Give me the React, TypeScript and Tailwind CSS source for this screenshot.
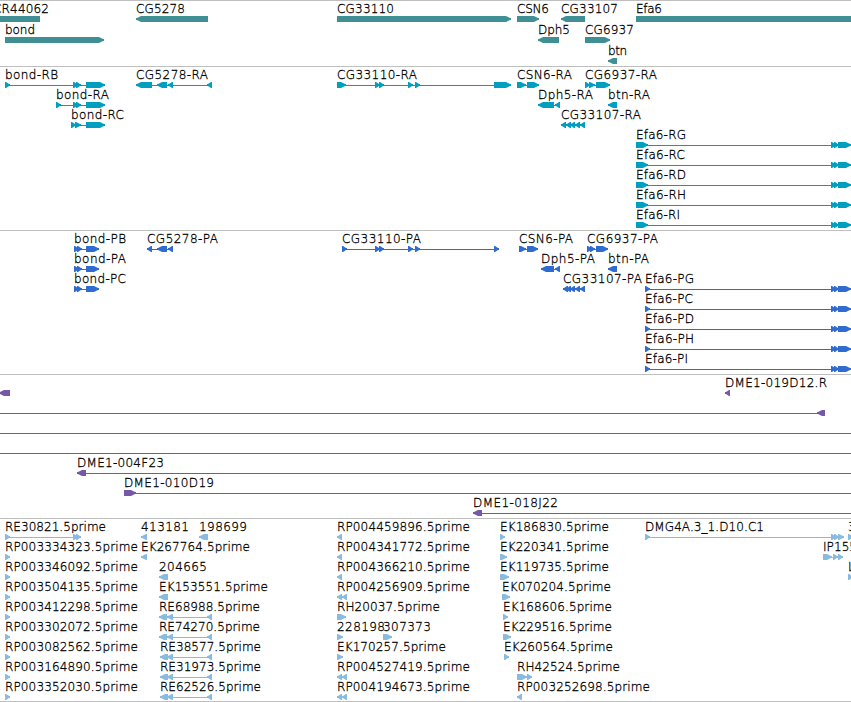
type Span = [number, number];

interface Feature {
  name?: string;
  x: number;
  row: number;
  strand: 1 | -1;
  blocks: Span[];
  // intron line, defaults to first block start .. last block end
  line?: Span;
}

interface Track {
  id: string;
  color: string;
  pitch: number;
  height: string;
  px: number;
  features: Feature[];
}

const WIDTH = 851;

// label advances in px, anything missing is 8
const ADVANCE: Record<string, number> = {
  P: 7, E: 7, F: 6, G: 9, S: 7, N: 9, D: 9, M: 10, H: 9, I: 3, J: 4, L: 7,
  '-': 7, '.': 4, _: 6, o: 7, n: 7, r: 5, i: 3, m: 11, e: 7, f: 4, a: 7, h: 7, t: 4,
};

const labelWidth = (s: string) => [...s].reduce((sum, c) => sum + (ADVANCE[c] ?? 8), 0);

const f = (name: string, x: number, row: number, strand: 1 | -1, blocks: Span[], line?: Span): Feature => ({
  name, x, row, strand, blocks, line,
});

const bondTail: Span[] = [[73, 78], [76, 81], [86, 105]];
const bondCds: Span[] = [[74, 79], [77, 82], [86, 99]];
const efaTail: Span[] = [[831, 836], [834, 839], [838, 851]];
const cgMid: Span[] = [[375, 380], [379, 384], [408, 413], [415, 420]];
const cg33107Tail: Span[] = [[566, 571], [570, 575], [575, 580], [580, 585]];
const reTail: Span[] = [[167, 173], [207, 212]];

const genes: Feature[] = [
  f('CR44062', -7, 0, -1, [[-7, 40]]),
  f('bond', 5, 1, 1, [[5, 104]]),
  f('CG5278', 136, 0, -1, [[136, 208]]),
  f('CG33110', 337, 0, 1, [[337, 511]]),
  f('CSN6', 517, 0, 1, [[517, 539]]),
  f('Dph5', 538, 1, -1, [[538, 559]]),
  f('CG33107', 561, 0, -1, [[561, 585]]),
  f('CG6937', 585, 1, 1, [[585, 610]]),
  f('btn', 608, 2, -1, [[608, 617]]),
  f('Efa6', 636, 0, 1, [[636, 870]]),
];

const transcripts: Feature[] = [
  f('bond-RB', 5, 0, 1, [[5, 10], ...bondTail]),
  f('bond-RA', 56, 1, 1, [[56, 61], ...bondTail]),
  f('bond-RC', 71, 2, 1, [[71, 76], [75, 81], [86, 105]]),
  f('CG5278-RA', 136, 0, -1, [[136, 152], [157, 167], [168, 173], [207, 212]]),
  f('CG33110-RA', 337, 0, 1, [[337, 346], ...cgMid, [494, 511]]),
  f('CSN6-RA', 517, 0, 1, [[517, 526], [527, 539]]),
  f('Dph5-RA', 538, 1, -1, [[538, 554], [555, 560]]),
  f('CG33107-RA', 561, 2, -1, [[561, 566], ...cg33107Tail]),
  f('CG6937-RA', 585, 0, 1, [[585, 590], [589, 595], [596, 610]]),
  f('btn-RA', 608, 1, -1, [[608, 617]]),
  ...['RG', 'RC', 'RD', 'RH', 'RI'].map((s, i) => f(`Efa6-${s}`, 636, i + 3, 1, [[636, 648], ...efaTail])),
];

const proteins: Feature[] = [
  ...['PB', 'PA', 'PC'].map((s, i) => f(`bond-${s}`, 74, i, 1, bondCds)),
  f('CG5278-PA', 147, 0, -1, [[147, 152], [157, 167], [168, 173]]),
  f('CG33110-PA', 342, 0, 1, [[342, 347], ...cgMid, [494, 499]]),
  f('CSN6-PA', 519, 0, 1, [[519, 526], [527, 538]]),
  f('Dph5-PA', 541, 1, -1, [[541, 554], [555, 560]]),
  f('CG33107-PA', 563, 2, -1, [[563, 568], ...cg33107Tail]),
  f('CG6937-PA', 587, 0, 1, [[587, 592], [590, 595], [596, 608]]),
  f('btn-PA', 608, 1, -1, [[608, 617]]),
  ...['PG', 'PC', 'PD', 'PH', 'PI'].map((s, i) => f(`Efa6-${s}`, 645, i + 2, 1, [[645, 650], ...efaTail])),
];

const clones: Feature[] = [
  f('', 0, 0, -1, [[-1, 10]]),
  f('DME1-019D12.R', 725, 0, -1, [[725, 730]]),
  f('', 0, 1, -1, [[817, 825]], [0, 825]),
  f('', 0, 2, 1, [], [0, WIDTH]),
  f('', 0, 3, 1, [], [0, WIDTH]),
  f('DME1-004F23', 77, 4, -1, [[77, 86]], [77, WIDTH]),
  f('DME1-010D19', 124, 5, 1, [[124, 136]], [124, WIDTH]),
  f('DME1-018J22', 473, 6, -1, [[473, 482]], [473, WIDTH]),
];

const ests: Feature[] = [
  f('RE30821.5prime', 5, 0, 1, [[5, 10], [73, 78], [76, 81]]),
  ...[
    'RP003334323', 'RP003346092', 'RP003504135', 'RP003412298',
    'RP003302072', 'RP003082562', 'RP003164890', 'RP003352030',
  ].map((s, i) => f(`${s}.5prime`, 5, i + 1, 1, [[5, 10]])),
  f('413181', 141, 0, -1, [[141, 147]]),
  f('198699', 199, 0, -1, [[199, 208]]),
  f('EK267764.5prime', 141, 1, -1, [[141, 147]]),
  f('204665', 159, 2, -1, [[159, 168]]),
  f('EK153551.5prime', 159, 3, -1, [[159, 168]]),
  f('RE68988.5prime', 159, 4, -1, [[159, 167], ...reTail]),
  f('RE74270.5prime', 159, 5, -1, [[159, 167], ...reTail]),
  f('RE38577.5prime', 160, 6, -1, [[160, 168], ...reTail]),
  f('RE31973.5prime', 160, 7, -1, [[160, 168], ...reTail]),
  f('RE62526.5prime', 160, 8, -1, [[160, 168], ...reTail]),
  f('RP004459896.5prime', 337, 0, -1, [[337, 342]]),
  f('RP004341772.5prime', 337, 1, -1, [[337, 342]]),
  f('RP004366210.5prime', 337, 2, -1, [[337, 342]]),
  f('RP004256909.5prime', 337, 3, -1, [[337, 342], [342, 347]]),
  f('RH20037.5prime', 337, 4, 1, [[337, 346]]),
  f('228198', 337, 5, 1, [[337, 343]]),
  f('307373', 383, 5, 1, [[383, 392]]),
  f('EK170257.5prime', 337, 6, 1, [[337, 343]]),
  f('RP004527419.5prime', 337, 7, -1, [[337, 342], [342, 347]]),
  f('RP004194673.5prime', 337, 8, -1, [[337, 342], [342, 347]]),
  f('EK186830.5prime', 500, 0, 1, [[500, 505]]),
  f('EK220341.5prime', 500, 1, 1, [[500, 507]]),
  f('EK119735.5prime', 500, 2, 1, [[500, 509]]),
  f('EK070204.5prime', 502, 3, 1, [[502, 510]]),
  f('EK168606.5prime', 503, 4, 1, [[503, 508]]),
  f('EK229516.5prime', 503, 5, 1, [[503, 511]]),
  f('EK260564.5prime', 504, 6, 1, [[504, 509]]),
  f('RH42524.5prime', 517, 7, 1, [[517, 527], [527, 532]]),
  f('RP003252698.5prime', 517, 8, -1, [[517, 522]]),
  f('DMG4A.3_1.D10.C1', 645, 0, 1, [[645, 650], [831, 836], [834, 839], [838, 844]]),
  f('IP155', 823, 1, 1, [[823, 832], [833, 838], [838, 843]]),
  f('3', 848, 0, 1, [[848, 853]]),
  f('L', 848, 2, 1, [[848, 853]]),
];

const tracks: Track[] = [
  { id: 'gene', color: '#408f94', pitch: 21, height: 'h-[66px]', px: 65, features: genes },
  { id: 'mrna', color: '#009fc0', pitch: 20, height: 'h-[164px]', px: 163, features: transcripts },
  { id: 'cds', color: '#306ccf', pitch: 20, height: 'h-[144px]', px: 143, features: proteins },
  { id: 'bac', color: '#7658a8', pitch: 20, height: 'h-[144px]', px: 143, features: clones },
  { id: 'est', color: '#88bbdd', pitch: 20, height: 'h-[183px]', px: 182, features: ests },
];

// box with a short head, the top and bottom rows stop first
function blockPoints([a, b]: Span, y: number, strand: 1 | -1) {
  const head = Math.min(b - a - 1, 5);
  const tip = strand === 1 ? b : a;
  const tail = strand === 1 ? a : b;
  const neck = tip - strand * head;
  return [
    [tail, y], [neck, y], [tip - strand, y + 2], [tip, y + 2],
    [tip, y + 4], [tip - strand, y + 4], [neck, y + 6], [tail, y + 6],
  ].map((p) => p.join(',')).join(' ');
}

function FeatureGlyph({ feature, pitch }: { feature: Feature; pitch: number }) {
  const { name, x, row, strand, blocks } = feature;
  const top = row * pitch;
  const [from, to] = feature.line ?? [blocks[0][0], blocks[blocks.length - 1][1]];

  return (
    <g>
      <rect x={from} y={top + 18} width={to - from} height={1} />
      {blocks.map((b) => (
        <polygon key={b[0]} points={blockPoints(b, top + 15, strand)} />
      ))}
      {name && (
        <text
          x={x}
          y={top + 12}
          textLength={labelWidth(name)}
          className="fill-black stroke-black stroke-[0.3px] font-extralight"
        >
          {name}
        </text>
      )}
    </g>
  );
}

export default function App() {
  return (
    <main className="flex h-[702px] w-[851px] flex-col overflow-hidden bg-white">
      {tracks.map((t) => (
        <section key={t.id} className={`shrink-0 overflow-hidden border-t border-[#bfbfbf] ${t.height}`}>
          <svg
            width={WIDTH}
            height={t.px}
            fill={t.color}
            className="block font-['DejaVu_Sans',sans-serif] text-[12px]"
          >
            {t.features.map((feature, i) => (
              <FeatureGlyph key={i} feature={feature} pitch={t.pitch} />
            ))}
          </svg>
        </section>
      ))}
      <div className="h-px shrink-0 bg-[#bfbfbf]" />
    </main>
  );
}
